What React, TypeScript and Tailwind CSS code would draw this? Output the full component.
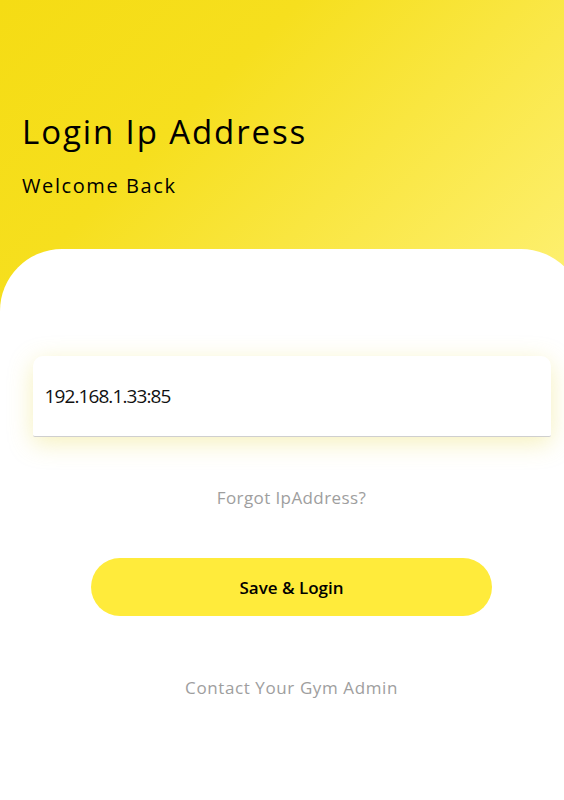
export default function App() {
  return (
    <div
      className="w-[564px] h-[800px] overflow-hidden flex flex-col bg-[linear-gradient(135deg,#F5DC14_0%,#F6DF1E_22%,#FDEF6C_60%,#FFF59D_100%)]"
      style={{ fontFamily: '"Open Sans", "Noto Sans", sans-serif' }}
    >
      {/* Header */}
      <div className="pt-[108px] pl-[22px] h-[249px]">
        <h1 className="text-[33px] leading-[48px] text-black tracking-[1.9px]">Login Ip Address</h1>
        <p className="mt-[16px] text-[20px] leading-[28px] text-black tracking-[1.6px]">Welcome Back</p>
      </div>

      {/* Sheet */}
      <div className="w-[583px] flex-1 bg-white rounded-t-[62px] flex flex-col items-center pt-[107px]">
        <div className="w-[518px] h-[81px] bg-white rounded-t-[10px] rounded-b-[2px] border-b border-[#cfcfcf] shadow-[0_6px_24px_rgba(230,215,60,0.35)] flex items-center px-[12px]">
          <span className="text-[19px] text-[#111] tracking-[-0.9px]">192.168.1.33:85</span>
        </div>

        <button className="mt-[48px] text-[17px] text-[#9e9e9e] tracking-[0.4px]">Forgot IpAddress?</button>

        <button className="mt-[47px] w-[401px] h-[58px] rounded-full bg-[#FFEB3B] text-[17px] font-semibold text-black pt-[3px]">
          Save &amp; Login
        </button>

        <button className="mt-[59px] text-[17px] text-[#9e9e9e] tracking-[0.6px]">Contact Your Gym Admin</button>
      </div>
    </div>
  );
}
